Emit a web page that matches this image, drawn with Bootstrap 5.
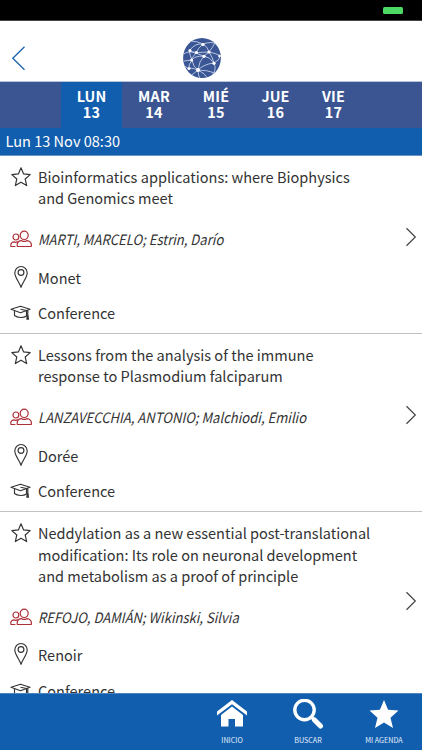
<!DOCTYPE html>
<html lang="es">
<head>
<meta charset="utf-8">
<meta name="viewport" content="width=device-width, initial-scale=1">
<title>Agenda</title>
<link href="https://cdn.jsdelivr.net/npm/bootstrap@5.3.0/dist/css/bootstrap.min.css" rel="stylesheet">
<style>
body{font-family:"Noto Sans CJK JP","Noto Sans",sans-serif;color:#333;font-size:14.55px;background:#fff}
.app{height:750px}
.status{height:21px;padding:7px 19px 0 0;border-bottom:1px solid #444}
.battery{width:20px;height:7px;background:#4cd964;border-radius:1.5px}
.topbar{height:61px;padding:0 0 2px 11px;border-bottom:1px solid #b8c4dc}
.brand{margin-left:156px}
.days{height:46px;background:#3b5592;padding-left:61px}
.day{font-weight:700;line-height:16.3px;padding-top:6px;color:#fff;font-size:14.4px;letter-spacing:.15px}
.day.active{background:#115eae}
.w57{width:57px}.w59{width:59px}.w60{width:60px}.w62{width:61px}.w63{width:64px}
.slot{height:28px;line-height:26px;background:#115eae;padding-left:5.5px;border-bottom:1px solid #6d97c9}
.talk{border-bottom:1px solid #c2c2c2;padding:10px 5px 9.9px 0}
.talk h2{font-size:inherit;font-weight:400;line-height:21.4px;margin:0 0 20.3px}
.rowline{line-height:21px}
.ico{width:38px;padding-left:10px}
.ico-people{padding-top:1px}
.ico-cap{padding-top:2px}
.names{font-style:italic;font-size:14.2px;margin-bottom:16.7px}
.names span{transform:scaleX(.921);transform-origin:left;white-space:nowrap}
.place{margin-bottom:14.4px}
.chev{margin-bottom:15px}
.chev-low{margin-bottom:21px}
.bottom{height:57px;background:#115eae;border-top:1px solid #4a84c2}
.tab{width:76px;font-size:7.2px;line-height:10px;color:#e4eefb}
.tab svg{margin:5px 1px 6px 0}
</style>
<script src="https://cdn.jsdelivr.net/npm/bootstrap@5.3.0/dist/js/bootstrap.bundle.min.js"></script>
</head>
<body>
<svg class="d-none">
<symbol id="star" viewBox="0 0 22 22"><path d="M11 1.8l2.6 6.1 6.6.7-5 4.4 1.5 6.6-5.7-3.4-5.7 3.4 1.5-6.6-5-4.4 6.6-.7z" fill="none" stroke="#333" stroke-width="1.15" stroke-linejoin="round"/></symbol>
<symbol id="people" viewBox="0 0 22 18"><g fill="none" stroke="#ae2f38" stroke-width="1.2" stroke-linecap="round" stroke-linejoin="round"><ellipse cx="14.2" cy="5.3" rx="4" ry="4.2"/><path d="M7.3 16.5c-.8-4.6 2.4-6 4.4-5.8 1.700 1 3.400 1 5 0 2.800-.1 5.300 2.200 4.600 5.800z"/><ellipse cx="5.900" cy="7" rx="2.900" ry="3"/><path d="M5 16.500H.9c-.5-2.800.8-4.500 3-4.600q2 .8 3.600-.1"/></g></symbol>
<symbol id="pin" viewBox="0 0 22 24"><g fill="none" stroke="#333" stroke-width="1.150"><path d="M11 22.300C9.500 17.500 4.800 12.500 4.800 8a6.200 6.500 0 0 1 12.400 0c0 4.500-4.700 9.500-6.200 14.300z" stroke-linejoin="round"/><circle cx="11" cy="7.500" r="2.900"/></g></symbol>
<symbol id="cap" viewBox="0 0 22 18"><g fill="none" stroke="#333" stroke-width="1.150" stroke-linejoin="round"><path d="M1 5.300l9.500-3 9.500 3-9.500 3.400z"/><path d="M4.500 7v4.500c3 2.500 9 2.600 12 .5V7M10.500 5.300l7.300 1.500v5.200"/></g><path d="M16.600 11.600h2l.5 4.200h-2.800z" fill="#333"/></symbol>
<symbol id="next" viewBox="0 0 12 20"><path d="M1.500 1.300L10.300 10 1.500 18.700" fill="none" stroke="#444" stroke-width="1.200"/></symbol>
</svg>
<div class="app d-flex flex-column overflow-hidden">
<div class="status bg-black d-flex justify-content-end flex-shrink-0"><div class="battery"></div></div>
<header class="topbar d-flex align-items-center flex-shrink-0">
<svg class="mt-3" width="15" height="26" viewBox="0 0 15 26"><path d="M13.500 1.800L1.800 13.200l11.700 11.500" fill="none" stroke="#1c62ad" stroke-width="1.300"/></svg>
<svg class="mt-3 brand" width="40" height="42" viewBox="0 0 40 42"><defs><clipPath id="disc"><ellipse cx="20" cy="21" rx="18.900" ry="20"/></clipPath></defs>
<ellipse cx="20" cy="21" rx="18.900" ry="20" fill="#3a5695"/>
<g clip-path="url(#disc)"><g fill="none" stroke="#c5d0e7" stroke-width=".9"><path d="M0 18Q7 13 13 16Q21 15 27 15Q33 16 39 19M8 4Q15 4 21 7Q30 4 34 7M21 7Q16 11 14 16Q9 22 10 23M21 7Q26 10 27 15L22 19Q18 18 14 16M8 13Q13 6 21 7M7 13Q11 16 14 15M7 13Q8 19 10 23Q6 28 7 32M22 19Q12 19 10 23Q11 30 16 33Q17 24 22 19Q28 20 32 26Q38 23 38 19M27 15Q34 6 33 3M27 15Q31 21 32 26Q22 27 16 33Q8 30 7 32L1 28M32 26Q35 33 30 38M16 33Q25 33 33 36M16 33Q16 38 18 42M16 33Q10 38 8 39M16 33Q23 36 26 42M2 24L10 23"/></g>
<g fill="#fff"><circle cx="21" cy="7.500" r="1.600"/><circle cx="8" cy="13.500" r="1.500"/><circle cx="14.500" cy="15.500" r="1.500"/><circle cx="27" cy="15" r="1.600"/><circle cx="22" cy="19.300" r="1.600"/><circle cx="9.700" cy="23" r="1.500"/><circle cx="32" cy="26.300" r="1.600"/><circle cx="7" cy="31.500" r="1.500"/><circle cx="16" cy="33" r="2"/><circle cx="37.500" cy="19" r="1.300"/></g></g></svg>
</header>
<nav class="days d-flex text-center flex-shrink-0">
<div class="day active w62">LUN<br>13</div><div class="day w63">MAR<br>14</div><div class="day w60">MIÉ<br>15</div><div class="day w59">JUE<br>16</div><div class="day w57">VIE<br>17</div>
</nav>
<div class="slot text-white flex-shrink-0">Lun 13 Nov 08:30</div>
<main class="flex-grow-1 overflow-hidden">
<article class="talk d-flex align-items-center">
<div class="flex-grow-1">
<div class="d-flex"><div class="ico flex-shrink-0"><svg class="d-block" width="22" height="22"><use href="#star"/></svg></div><h2>Bioinformatics applications: where Biophysics<br>and Genomics meet</h2></div>
<div class="d-flex rowline names"><div class="ico ico-people flex-shrink-0"><svg class="d-block" width="22" height="18"><use href="#people"/></svg></div><span>MARTI, MARCELO; Estrin, Darío</span></div>
<div class="d-flex rowline place"><div class="ico flex-shrink-0"><svg class="d-block" width="22" height="21" viewBox="0 2 22 21" overflow="visible"><use href="#pin" width="22" height="24"/></svg></div><span>Monet</span></div>
<div class="d-flex rowline"><div class="ico ico-cap flex-shrink-0"><svg class="d-block" width="22" height="18"><use href="#cap"/></svg></div><span>Conference</span></div>
</div>
<svg class="chev flex-shrink-0" width="12" height="20"><use href="#next"/></svg>
</article>
<article class="talk d-flex align-items-center">
<div class="flex-grow-1">
<div class="d-flex"><div class="ico flex-shrink-0"><svg class="d-block" width="22" height="22"><use href="#star"/></svg></div><h2>Lessons from the analysis of the immune<br>response to Plasmodium falciparum</h2></div>
<div class="d-flex rowline names"><div class="ico ico-people flex-shrink-0"><svg class="d-block" width="22" height="18"><use href="#people"/></svg></div><span>LANZAVECCHIA, ANTONIO; Malchiodi, Emilio</span></div>
<div class="d-flex rowline place"><div class="ico flex-shrink-0"><svg class="d-block" width="22" height="21" viewBox="0 2 22 21" overflow="visible"><use href="#pin" width="22" height="24"/></svg></div><span>Dorée</span></div>
<div class="d-flex rowline"><div class="ico ico-cap flex-shrink-0"><svg class="d-block" width="22" height="18"><use href="#cap"/></svg></div><span>Conference</span></div>
</div>
<svg class="chev flex-shrink-0" width="12" height="20"><use href="#next"/></svg>
</article>
<article class="talk d-flex align-items-center">
<div class="flex-grow-1">
<div class="d-flex"><div class="ico flex-shrink-0"><svg class="d-block" width="22" height="22"><use href="#star"/></svg></div><h2>Neddylation as a new essential post-translational<br>modification: Its role on neuronal development<br>and metabolism as a proof of principle</h2></div>
<div class="d-flex rowline names"><div class="ico ico-people flex-shrink-0"><svg class="d-block" width="22" height="18"><use href="#people"/></svg></div><span>REFOJO, DAMIÁN; Wikinski, Silvia</span></div>
<div class="d-flex rowline place"><div class="ico flex-shrink-0"><svg class="d-block" width="22" height="21" viewBox="0 2 22 21" overflow="visible"><use href="#pin" width="22" height="24"/></svg></div><span>Renoir</span></div>
<div class="d-flex rowline"><div class="ico ico-cap flex-shrink-0"><svg class="d-block" width="22" height="18"><use href="#cap"/></svg></div><span>Conference</span></div>
</div>
<svg class="chev-low flex-shrink-0" width="12" height="20"><use href="#next"/></svg>
</article>
</main>
<footer class="bottom d-flex justify-content-end text-center flex-shrink-0">
<div class="tab"><svg width="32" height="30" viewBox="0 0 32 30" fill="#fff"><path d="M16 1L1 12.500v4L16 5.200 31 16.500v-4z"/><path d="M16 7.500L5 16V27.500h7.500V20h6.500v7.500H27V16z"/></svg><div>INICIO</div></div>
<div class="tab"><svg width="32" height="30" viewBox="0 0 32 30"><circle cx="12.500" cy="11" r="9.700" fill="none" stroke="#fff" stroke-width="3.400"/><path d="M19 18l3 2.500" stroke="#fff" stroke-width="3"/><path d="M22.500 21l6 6" stroke="#fff" stroke-width="5" stroke-linecap="round"/></svg><div>BUSCAR</div></div>
<div class="tab"><svg width="32" height="30" viewBox="0 0 32 30"><path d="M16 1l4.100 9.800 10.400.7-8 7.200 2.500 10.200L16 23.400l-9 5.500 2.500-10.200-8-7.200 10.400-.7z" fill="#fff"/></svg><div>MI AGENDA</div></div>
</footer>
</div>
</body>
</html>
